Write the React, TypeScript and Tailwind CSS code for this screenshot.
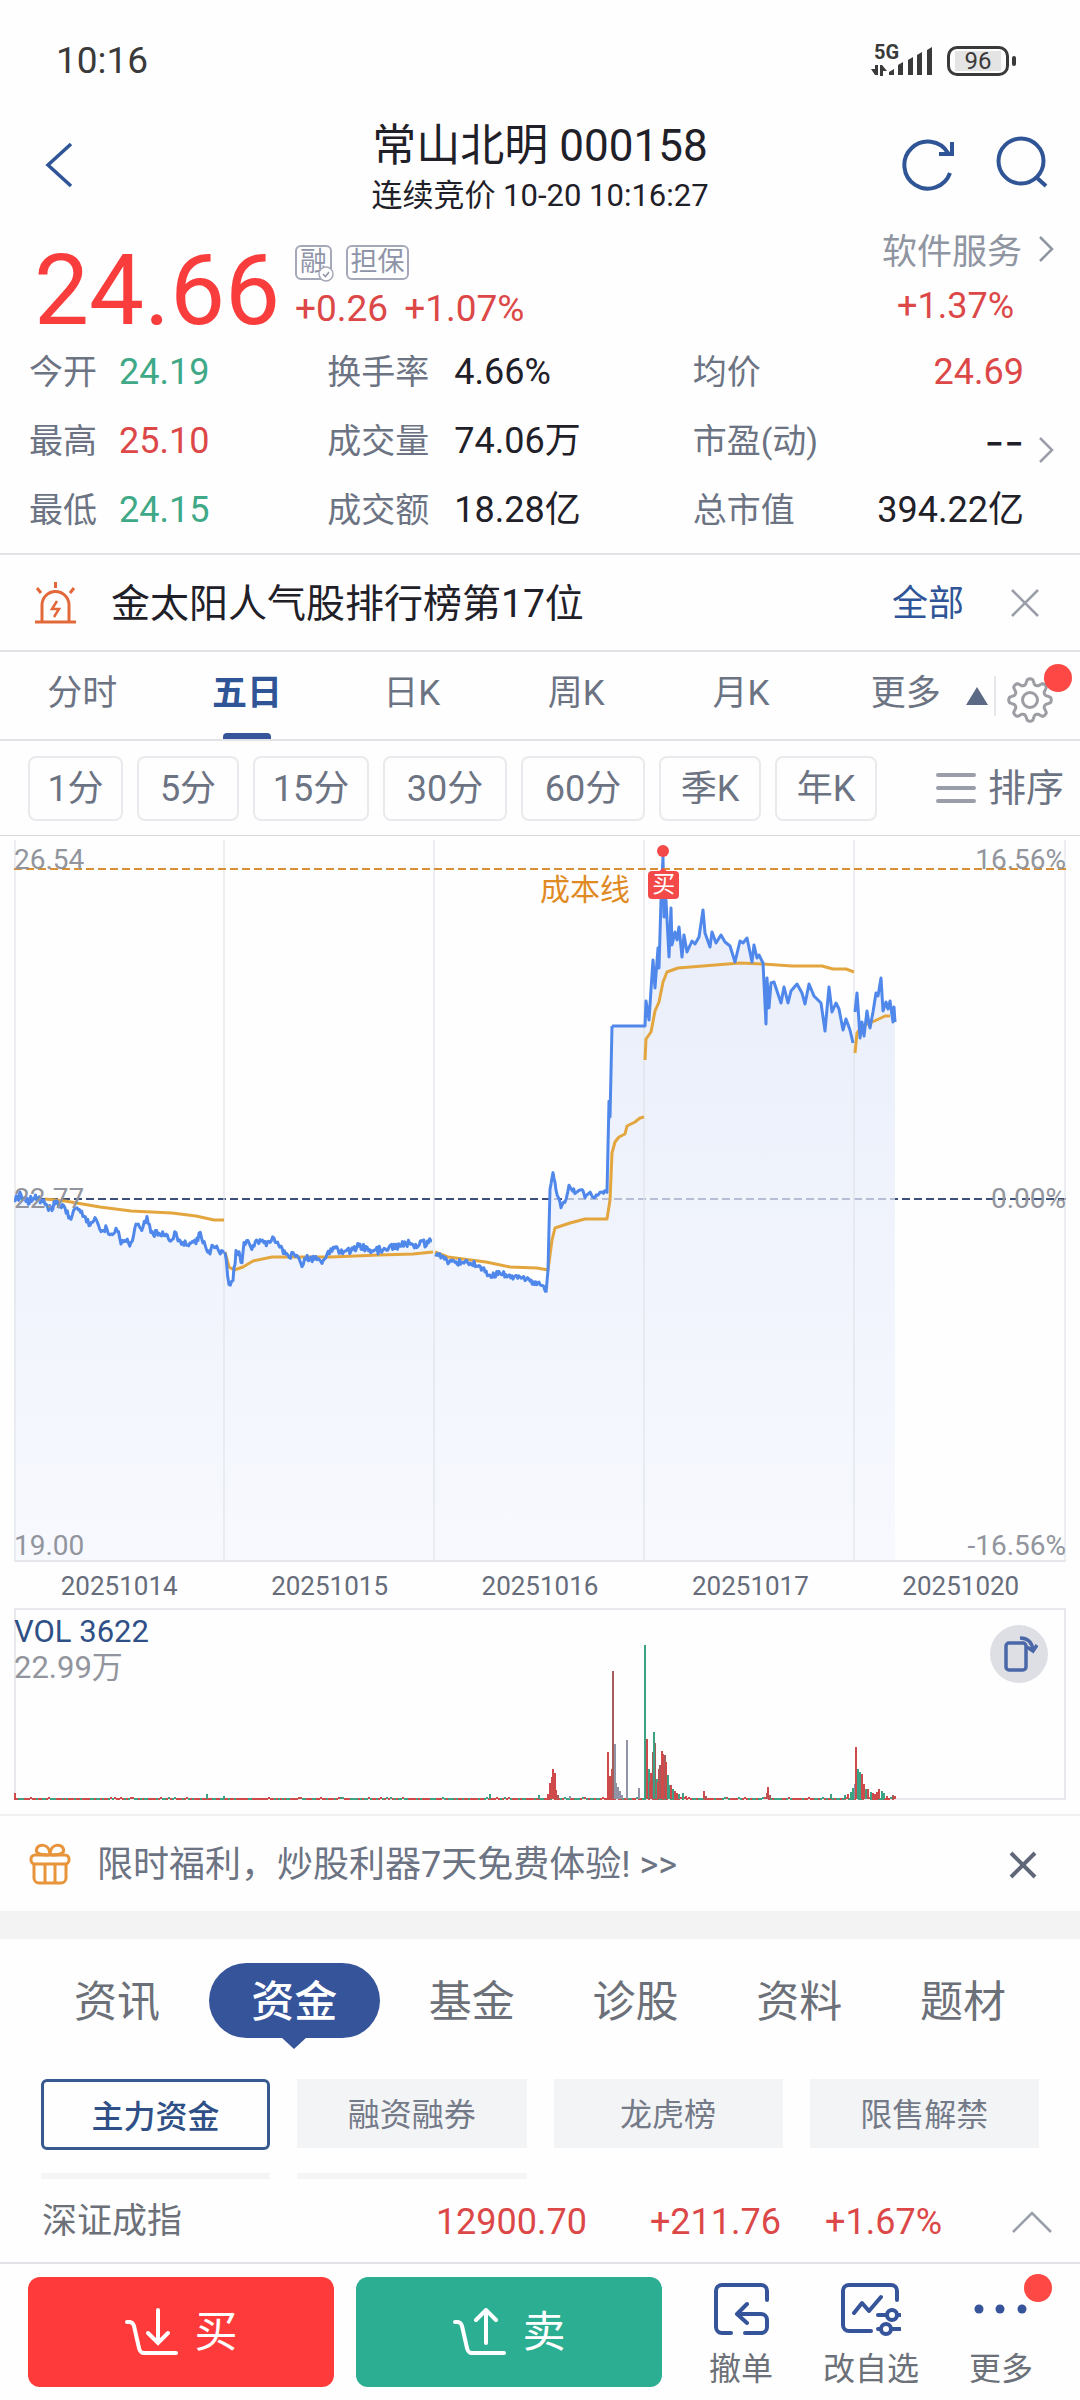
import type { ReactNode } from "react";

type Point = [number, number];

const quotes = [
  { label: "今开", value: "24.19", tone: "text-[36px] text-[#3fa987]" },
  { label: "换手率", value: "4.66%", tone: "text-[36px] text-[#1f2028]" },
  { label: "均价", value: "24.69", tone: "text-[36px] text-[#dc4747]" },
  { label: "最高", value: "25.10", tone: "text-[36px] text-[#dc4747]" },
  { label: "成交量", value: "74.06万", tone: "text-[36px] text-[#1f2028]" },
  { label: "市盈(动)", value: "--", tone: "font-['Inter'] text-[43px] text-[#1f2028]" },
  { label: "最低", value: "24.15", tone: "text-[36px] text-[#3fa987]" },
  { label: "成交额", value: "18.28亿", tone: "text-[36px] text-[#1f2028]" },
  { label: "总市值", value: "394.22亿", tone: "text-[36px] text-[#1f2028]" },
];

const periods = ["分时", "五日", "日K", "周K", "月K", "更多"];

const intervals = [
  { label: "1分", width: "w-[95px]" },
  { label: "5分", width: "w-[102px]" },
  { label: "15分", width: "w-[116px]" },
  { label: "30分", width: "w-[124px]" },
  { label: "60分", width: "w-[124px]" },
  { label: "季K", width: "w-[102px]" },
  { label: "年K", width: "w-[102px]" },
];

const dates = ["20251014", "20251015", "20251016", "20251017", "20251020"];
const sections = ["资讯", "资金", "基金", "诊股", "资料", "题材"];
const topics = ["主力资金", "融资融券", "龙虎榜", "限售解禁"];

// one series per trading day, in plot units (1052 x 726)
const priceDays: { jitter: number; points: Point[] }[] = [
  {
    jitter: 4,
    points: [
      [0, 364], [7, 359], [12, 366], [19, 362], [24, 361], [31, 369], [38, 374], [41, 367], [51, 372], [57, 382],
      [62, 372], [70, 381], [75, 389], [81, 382], [87, 394], [93, 392], [97, 399], [102, 392], [107, 407], [117, 406],
      [122, 389], [129, 391], [133, 381], [138, 397], [151, 400], [158, 405], [162, 397], [165, 405], [182, 408],
      [185, 397], [189, 407], [196, 417], [199, 411], [210, 417],
    ],
  },
  {
    jitter: 4,
    points: [
      [211, 417], [215, 448], [219, 444], [222, 416], [225, 417], [228, 428], [230, 407], [234, 405], [239, 411],
      [246, 405], [256, 407], [260, 401], [267, 411], [274, 420], [284, 420], [288, 430], [292, 422], [308, 426],
      [318, 414], [337, 416], [346, 409], [358, 416], [375, 412], [392, 408], [404, 409], [418, 405],
    ],
  },
  {
    jitter: 3,
    points: [
      [421, 419], [428, 419], [434, 427], [449, 426], [465, 429], [477, 441], [485, 436], [499, 443], [506, 440],
      [516, 446], [525, 446], [532, 456],
    ],
  },
  {
    jitter: 2,
    points: [
      [532, 456], [534, 434], [536, 353], [539, 337], [542, 354], [547, 371], [551, 366], [555, 350], [562, 357],
      [568, 353], [571, 362], [575, 357], [581, 362], [586, 356], [593, 356], [595, 265], [596, 281], [598, 190],
    ],
  },
  {
    jitter: 0,
    points: [
      [598, 190], [631, 190], [632, 165], [635, 184], [639, 124], [641, 152], [644, 112], [645, 132], [647, 64],
      [649, 21], [650, 81], [652, 64], [655, 121], [657, 72], [658, 109], [661, 96], [663, 104], [665, 91], [668, 121],
      [670, 99], [673, 116], [678, 105], [681, 108], [685, 101], [689, 74], [691, 97], [696, 111], [698, 96],
      [702, 107], [707, 99], [711, 106], [716, 110], [721, 126], [726, 105], [729, 107], [733, 102], [738, 126],
      [740, 109], [743, 122], [745, 119], [749, 127], [752, 188], [753, 142], [755, 172], [757, 147], [760, 146],
      [767, 167], [770, 151], [774, 167], [777, 155], [783, 148], [788, 157], [791, 168], [795, 148], [800, 160],
      [807, 167], [811, 195], [815, 151], [818, 176], [822, 167], [825, 173], [829, 194], [832, 183], [836, 194],
      [839, 207],
    ],
  },
  {
    jitter: 0,
    points: [
      [841, 176], [843, 157], [844, 170], [846, 202], [848, 186], [850, 200], [853, 175], [855, 188], [856, 192],
      [859, 176], [862, 157], [864, 160], [867, 142], [869, 175], [872, 166], [874, 173], [876, 165], [879, 186],
      [880, 171], [881, 186],
    ],
  },
];

const averageDays: Point[][] = [
  [[31, 363], [51, 365], [86, 371], [117, 375], [158, 377], [182, 380], [200, 384], [210, 384]],
  [
    [211, 416], [215, 431], [220, 434], [229, 431], [239, 425], [258, 421], [317, 421], [365, 419], [399, 418],
    [419, 416],
  ],
  [
    [421, 416], [434, 421], [472, 426], [496, 431], [523, 432], [534, 434], [538, 404], [541, 392], [547, 390],
    [556, 387], [571, 383], [593, 383], [596, 364], [598, 317], [601, 306], [605, 301], [611, 298], [613, 290],
    [621, 286], [626, 282], [630, 281],
  ],
  [
    [631, 224], [632, 203], [637, 196], [641, 175], [645, 166], [649, 146], [653, 136], [664, 132], [689, 130],
    [726, 127], [749, 128], [778, 130], [808, 130], [819, 133], [832, 133], [840, 136],
  ],
  [[841, 217], [843, 197], [847, 191], [856, 187], [867, 182], [871, 180], [876, 180]],
];

const RED = "#cf4a4a";
const GREEN = "#3da283";
const GREY = "#9194a6";
const BROWN = "#a55d5b";

// x, height, colour
const volumes: [number, number, string][] = [
  [0, 6, RED], [192, 5, GREEN], [209, 3, GREEN], [475, 5, GREEN], [524, 4, GREEN],
  [533, 5, RED], [535, 16, RED], [537, 22, RED], [538, 30, RED], [540, 26, RED], [541, 9, RED], [543, 4, BROWN],
  [555, 3, GREY], [593, 47, RED], [595, 23, RED], [597, 30, RED], [600, 55, GREY], [598, 128, BROWN],
  [601, 16, GREY], [603, 12, GREY], [605, 8, GREY], [607, 4, GREY], [612, 59, GREY], [624, 11, GREY],
  [632, 60, RED], [630, 154, GREEN], [634, 30, GREEN], [635, 17, BROWN], [636, 26, RED], [638, 47, BROWN],
  [640, 56, BROWN], [639, 67, GREEN], [642, 20, GREEN], [643, 17, RED], [644, 30, RED], [645, 34, BROWN],
  [647, 48, RED], [648, 45, RED], [650, 44, BROWN], [651, 37, RED], [653, 24, GREEN], [654, 14, GREEN],
  [656, 14, RED], [658, 10, GREEN], [660, 8, RED], [662, 6, RED], [664, 5, GREEN], [668, 6, GREEN], [671, 3, RED],
  [689, 8, RED], [691, 3, BROWN], [752, 6, BROWN], [753, 12, RED], [755, 4, BROWN], [816, 5, GREEN],
  [830, 4, GREEN], [833, 5, RED], [836, 7, GREEN], [838, 11, GREEN], [840, 15, GREY], [841, 52, RED],
  [843, 30, GREEN], [845, 27, GREEN], [847, 25, RED], [849, 15, RED], [851, 10, GREEN], [853, 10, RED],
  [856, 7, GREEN], [858, 6, RED], [860, 5, RED], [862, 7, RED], [864, 10, RED], [867, 8, GREEN], [869, 6, GREEN],
  [872, 3, RED], [878, 4, BROWN], [880, 3, RED],
];

const noise = (n: number) => {
  const v = Math.sin(n * 127.1) * 43758.5453;
  return (v - Math.floor(v)) * 2 - 1;
};

// adds a tick-level wobble between the recorded points
function densify(points: Point[], jitter: number): Point[] {
  if (!jitter) return points;
  const out: Point[] = [];
  for (let i = 0; i < points.length - 1; i++) {
    const [x0, y0] = points[i];
    const [x1, y1] = points[i + 1];
    const steps = Math.max(1, Math.round((x1 - x0) / 1.2));
    for (let s = 0; s < steps; s++) {
      const t = s / steps;
      const x = x0 + (x1 - x0) * t;
      out.push([x, y0 + (y1 - y0) * t + noise(x) * jitter * (s ? 1 : 0.4)]);
    }
  }
  out.push(points[points.length - 1]);
  return out;
}

const toPath = (points: Point[]) => "M" + points.map(([x, y]) => `${x.toFixed(1)} ${y.toFixed(1)}`).join("L");

const pricePaths = priceDays.map((d) => densify(d.points, d.jitter));
const areaPath = toPath(pricePaths.flat()) + "L881 726L0 726Z";

const gearPath =
  toPath(
    Array.from({ length: 96 }, (_, i) => {
      const a = (i / 96) * Math.PI * 2;
      const r = 18.5 + 3 * Math.tanh(1.6 * Math.cos(a * 8));
      return [24 + r * Math.sin(a), 24 - r * Math.cos(a)] as Point;
    }),
  ) + "Z";

const GRID_X = [1, 210, 420, 630, 840, 1051];

function Chevron({ className = "" }: { className?: string }) {
  return (
    <svg width="16" height="26" viewBox="0 0 16 26" fill="none" stroke="currentColor" strokeWidth="2.5" className={className}>
      <path d="M2 1L14 13L2 25" />
    </svg>
  );
}

function StatusBar() {
  return (
    <div className="flex h-[121px] items-center justify-between pl-14 pr-16 text-[#3a3a3a]">
      <span className="text-[37px] leading-none">10:16</span>
      <div className="flex items-center gap-[14px]">
        <div className="relative h-8 w-[62px]">
          <span className="absolute left-[3px] top-0 text-xl leading-[14px] font-bold">5G</span>
          <svg viewBox="0 0 62 32" className="h-8 w-[62px]" fill="currentColor">
            <path d="M18 30v-3l5-3v6zM27 30V20l5-3v13zM37 30V15l5-3v18zM46 30V10l5-3v23zM56 30V5l5-3v28z" />
            <path d="M4 20h3v10H4l-4-6h4zM9 20h2l5 6h-4v5H9z" />
          </svg>
        </div>
        <div className="flex items-center gap-[3px]">
          <div className="flex h-[30px] w-[62px] items-center justify-center rounded-[10px] border-3 border-[#3a3a3a]">
            <span className="h-[20px] w-[46px] bg-[#e4e4e4] text-center text-2xl leading-[21px]">96</span>
          </div>
          <span className="h-[10px] w-1 rounded-sm bg-[#3a3a3a]" />
        </div>
      </div>
    </div>
  );
}

function Header() {
  return (
    <header className="grid h-[100px] grid-cols-[1fr_auto_1fr] items-center">
      <button type="button" aria-label="返回" className="justify-self-start pb-3 pl-11 text-[#2f5597]">
        <svg width="30" height="46" viewBox="0 0 30 46" fill="none" stroke="currentColor" strokeWidth="3.5">
          <path d="M27 2L4 23L27 44" />
        </svg>
      </button>
      <div className="text-center text-[#1f2028]">
        <h1 className="text-[44px] leading-[50px]">常山北明 000158</h1>
        <p className="text-[31px] leading-[50px]">连续竞价 10-20 10:16:27</p>
      </div>
      <div className="flex gap-10 justify-self-end pr-8 pb-4 text-[#2f5597]">
        <button type="button" aria-label="刷新">
          <svg width="54" height="56" viewBox="0 0 54 56" fill="none" stroke="currentColor" strokeWidth="4">
            <path d="M48 38A23.5 23.5 0 1 1 46 18" />
            <path d="M50 7V19H37" />
          </svg>
        </button>
        <button type="button" aria-label="搜索">
          <svg width="52" height="54" viewBox="0 0 52 54" fill="none" stroke="currentColor" strokeWidth="4">
            <circle cx="25" cy="25" r="22.5" />
            <path d="M40 41L50 50" />
          </svg>
        </button>
      </div>
    </header>
  );
}

function Price() {
  return (
    <section className="flex h-[117px] justify-between pt-3 pr-[26px] pl-[34px]">
      <div className="flex pt-2">
        <strong className="w-[261px] text-[98px] leading-[100px] font-normal text-[#f93c3c]">24.66</strong>
        <div className="pt-1">
          <div className="flex gap-[14px] text-[#8f94a8]">
            <span className="relative h-[35px] w-[37px] rounded-md border-2 border-[#a4a8b8] text-center text-[27px] leading-[31px]">
              融
              <svg viewBox="0 0 16 16" className="absolute -right-1 -bottom-1 h-4 w-4">
                <circle cx="8" cy="8" r="7" fill="#fff" stroke="#a4a8b8" strokeWidth="1.5" />
                <path d="M5 8L7.5 10.5L11 6" fill="none" stroke="#8f94a8" strokeWidth="1.5" />
              </svg>
            </span>
            <span className="h-[35px] w-[63px] rounded-md border-2 border-[#a4a8b8] text-center text-[27px] leading-[31px]">
              担保
            </span>
          </div>
          <p className="flex gap-4 text-[37px] leading-[58px] text-[#dc4747]">
            <span>+0.26</span>
            <span>+1.07%</span>
          </p>
        </div>
      </div>
      <div>
        <a href="#sector" className="flex items-center gap-4 text-[35px] leading-[40px] text-[#8f95a1]">
          软件服务
          <Chevron className="mb-2" />
        </a>
        <p className="pr-10 text-right text-[36px] leading-[66px] text-[#dc4747]">+1.37%</p>
      </div>
    </section>
  );
}

function Quotes() {
  return (
    <section className="flex pb-2">
      <dl className="grid flex-1 grid-cols-[298fr_365fr_331fr] pl-[29px]">
        {quotes.map((q, i) => (
          <div key={q.label} className={i % 3 === 2 ? "flex justify-between leading-[69px]" : "flex leading-[69px]"}>
            <dt className={`text-[34px] text-[#6c7383] ${i % 3 === 0 ? "w-[90px]" : i % 3 === 1 ? "w-[127px]" : ""}`}>
              {q.label}
            </dt>
            <dd className={q.tone}>{q.value}</dd>
          </div>
        ))}
      </dl>
      <button type="button" aria-label="更多行情" className="w-14 pt-4 pl-[14px] text-[#9a9ea8]">
        <Chevron />
      </button>
    </section>
  );
}

function Notice() {
  return (
    <section className="flex h-[97px] items-center border-t-2 border-[#e2e3e6] pr-10 pl-[34px]">
      <svg width="43" height="44" viewBox="0 0 43 44" fill="none" stroke="#e2683a" strokeWidth="3">
        <path d="M8 40V24a13.5 13.5 0 0 1 27 0V40M1 41H42M21.5 1V7M3 7L7 12M40 7L36 12" />
        <path d="M23 20L18 28H25L20 36" strokeWidth="2.5" />
      </svg>
      <p className="flex-1 pt-[3px] pl-[34px] text-[39px] text-[#1f2028]">金太阳人气股排行榜第17位</p>
      <a href="#all" className="mr-[46px] pt-[2px] text-[36px] text-[#2f5597]">
        全部
      </a>
      <button type="button" aria-label="关闭提醒" className="text-[#9a9ea8]">
        <svg width="30" height="30" viewBox="0 0 30 30" fill="none" stroke="currentColor" strokeWidth="2.5">
          <path d="M2 2L28 28M28 2L2 28" />
        </svg>
      </button>
    </section>
  );
}

function Periods() {
  return (
    <nav className="flex h-[89px] border-t-2 border-[#e2e3e6]">
      <div className="grid flex-1 grid-cols-6">
        {periods.map((p) => (
          <button
            key={p}
            type="button"
            className={
              p === "五日"
                ? "relative pb-[2px] text-[35px] font-bold text-[#2f5597]"
                : "relative pb-[2px] text-[35px] text-[#6c7383]"
            }
          >
            {p}
            {p === "五日" && (
              <span className="absolute bottom-0 left-1/2 h-[6px] w-12 -translate-x-1/2 rounded-t-sm bg-[#36549a]" />
            )}
            {p === "更多" && (
              <svg viewBox="0 0 22 18" className="absolute top-[35px] right-0 h-[18px] w-[22px]" fill="#5d6a85">
                <path d="M11 0L22 18H0Z" />
              </svg>
            )}
          </button>
        ))}
      </div>
      <button type="button" aria-label="设置" className="relative w-[92px] pt-2 pl-[18px]">
        <span className="absolute top-6 left-[6px] h-10 w-[2px] bg-[#e6e7ea]" />
        <svg width="48" height="48" viewBox="0 0 48 48" fill="none" stroke="#9c9ea3" strokeWidth="3">
          <path d={gearPath} />
          <circle cx="24" cy="24" r="7.5" />
        </svg>
        <span className="absolute top-3 right-2 h-7 w-7 rounded-full bg-[#fd4846]" />
      </button>
    </nav>
  );
}

function Intervals() {
  return (
    <div className="flex h-[96px] items-center justify-between border-t-2 border-[#e2e3e6] pr-4 pl-7 text-[#6c7383]">
      <div className="flex gap-[14px]">
        {intervals.map((it) => (
          <button
            key={it.label}
            type="button"
            className={`h-[65px] rounded-lg border-2 border-[#e9eaed] pt-[2px] text-[36px] leading-none ${it.width}`}
          >
            {it.label}
          </button>
        ))}
      </div>
      <button type="button" className="flex items-center gap-3 text-[38px] leading-none">
        <svg width="40" height="34" viewBox="0 0 40 34" stroke="#9a9ea8" strokeWidth="4" strokeLinecap="round">
          <path d="M2 4H38M2 17H38M2 30H38" />
        </svg>
        排序
      </button>
    </div>
  );
}

function PriceChart() {
  return (
    <div className="relative">
      <svg viewBox="0 0 1052 726" className="block h-auto w-full" fill="none">
        <defs>
          <linearGradient id="area" x1="0" y1="0" x2="0" y2="1">
            <stop offset="0" stopColor="#dfe6f8" />
            <stop offset="1" stopColor="#f4f7fe" />
          </linearGradient>
        </defs>
        <path d="M0 363H1052" stroke="#3e4f77" strokeWidth="2" strokeDasharray="8 4" />
        <path d={areaPath} fill="url(#area)" fillOpacity="0.7" />
        {GRID_X.map((x) => (
          <path key={x} d={`M${x} 4V726`} stroke="#dfe2e8" strokeOpacity="0.6" strokeWidth="2" />
        ))}
        <path d="M0 725H1052" stroke="#e6e7ea" strokeWidth="2" />
        {averageDays.map((points, i) => (
          <path key={i} d={toPath(points)} stroke="#e3a63f" strokeWidth="3" strokeLinejoin="round" />
        ))}
        {pricePaths.map((points, i) => (
          <path key={i} d={toPath(points)} stroke="#4f88ea" strokeWidth="3" strokeLinejoin="round" />
        ))}
        <path d="M0 33H1052" stroke="#d98f35" strokeWidth="2" strokeDasharray="8 4" />
        <circle cx="649" cy="15" r="6" fill="#f34a49" />
        <path d="M649 32L655 37H643Z" fill="#f34a49" />
      </svg>
      <div className="absolute inset-0 text-[28px] leading-8 text-[#92959d]">
        <span className="absolute top-[8px] left-0">26.54</span>
        <span className="absolute top-[8px] right-0">16.56%</span>
        <span className="absolute top-1/2 left-0 -translate-y-1/2">22.77</span>
        <span className="absolute top-1/2 right-0 -translate-y-1/2">0.00%</span>
        <span className="absolute bottom-0 left-0">19.00</span>
        <span className="absolute right-0 bottom-0">-16.56%</span>
        <span className="absolute top-[38px] left-1/2 text-[30px] text-[#e08a24]">成本线</span>
        <span className="absolute top-[35px] left-[60%] ml-[3px] h-7 w-[31px] rounded-sm bg-[#f34a49] text-center text-[23px] leading-7 text-white">
          买
        </span>
      </div>
    </div>
  );
}

function VolumeChart() {
  return (
    <div className="relative">
      <svg viewBox="0 0 1052 192" className="block h-auto w-full">
        <rect x="1" y="1" width="1050" height="190" fill="none" stroke="#e8e9ec" strokeWidth="2" />
        {Array.from({ length: 440 }, (_, i) => (
          <rect
            key={i}
            x={i * 2}
            y={noise(i + 7) > 0.7 ? 189 : 190}
            width="2"
            height="2"
            fill={noise(i) > 0.2 ? GREEN : RED}
          />
        ))}
        {volumes.map(([x, h, color]) => (
          <rect key={x} x={x} y={191 - h} width="2" height={h} fill={color} />
        ))}
      </svg>
      <div className="absolute top-[6px] left-0 text-[31px] leading-[36px]">
        <p className="text-[#2f5086]">VOL 3622</p>
        <p className="text-[#92959d]">22.99万</p>
      </div>
      <button
        type="button"
        aria-label="横屏"
        className="absolute top-[17px] right-[18px] flex h-[58px] w-[58px] items-center justify-center rounded-full bg-[#dedfe5]"
      >
        <svg width="38" height="38" viewBox="0 0 38 38" fill="none" stroke="#4a68a8" strokeWidth="3.5">
          <rect x="6" y="8" width="20" height="27" rx="3" />
          <path d="M20 3C28 3 32 7 33 15M27 12L33 16L37 10" />
        </svg>
      </button>
    </div>
  );
}

function Promo() {
  return (
    <section className="flex h-[97px] items-center border-t-2 border-[#f0f0f2] pr-[42px] pl-[29px] text-[#6c7383]">
      <svg width="42" height="42" viewBox="0 0 42 42" fill="none" stroke="#e8943a" strokeWidth="3">
        <rect x="2" y="12" width="38" height="9" rx="4" />
        <path d="M5 21V35a5 5 0 0 0 5 5H32a5 5 0 0 0 5-5V21M16 22V39M26 22V39" />
        <path d="M20 12C8 12 6 9 8 5S20 0 21 11C22 0 32 1 34 5S34 12 22 12" />
      </svg>
      <a href="#promo" className="flex-1 pt-[2px] pl-[26px] text-[36px]">
        限时福利，炒股利器7天免费体验! &gt;&gt;
      </a>
      <button type="button" aria-label="关闭福利" className="pt-[2px]">
        <svg width="30" height="30" viewBox="0 0 30 30" fill="none" stroke="#5f6779" strokeWidth="4">
          <path d="M3 3L27 27M27 3L3 27" />
        </svg>
      </button>
    </section>
  );
}

function Sections() {
  return (
    <nav className="flex px-[35px] pt-6 pb-[41px] text-[43px] leading-[71px] text-[#6c7078]">
      {sections.map((s) =>
        s === "资金" ? (
          <button
            key={s}
            type="button"
            className="relative mx-[10px] w-[171px] rounded-full bg-[#36549a] pt-1 font-medium text-white"
          >
            {s}
            <svg viewBox="0 0 26 12" className="absolute top-full left-1/2 -mt-px h-3 w-[26px] -translate-x-1/2" fill="#36549a">
              <path d="M0 0H26L13 12Z" />
            </svg>
          </button>
        ) : (
          <button key={s} type="button" className="flex-1 pt-1">
            {s}
          </button>
        ),
      )}
    </nav>
  );
}

function Topics() {
  return (
    <div className="px-[41px]">
      <div className="grid grid-cols-4 items-start gap-x-[27px] text-[32px]">
        {topics.map((t, i) => (
          <button
            key={t}
            type="button"
            className={
              i === 0
                ? "h-[71px] rounded-md border-3 border-[#36598f] pt-1 font-medium text-[#2f5086]"
                : "h-[69px] bg-[#f3f4f6] pt-[2px] text-[#747a88]"
            }
          >
            {t}
          </button>
        ))}
      </div>
      <div className="mt-[23px] grid grid-cols-4 gap-x-[27px]">
        <span className="h-[6px] bg-[#f5f5f6]" />
        <span className="h-[6px] bg-[#f5f5f6]" />
      </div>
    </div>
  );
}

function IndexRow() {
  return (
    <section className="flex h-[83px] items-center pt-[3px] pr-7 pl-[42px] text-[36px] text-[#dc4747]">
      <span className="flex-1 text-[35px] text-[#6c7078]">深证成指</span>
      <span className="w-[200px] text-right">12900.70</span>
      <span className="w-[194px] text-right">+211.76</span>
      <span className="w-[161px] text-right">+1.67%</span>
      <button type="button" aria-label="展开指数" className="ml-[70px] text-[#9a9ea8]">
        <svg width="40" height="22" viewBox="0 0 40 22" fill="none" stroke="currentColor" strokeWidth="2.5">
          <path d="M1 21L20 2L39 21" />
        </svg>
      </button>
    </section>
  );
}

function TradeButton({ label, color, children }: { label: string; color: string; children: ReactNode }) {
  return (
    <button
      type="button"
      className={`flex h-[110px] flex-[306] items-center justify-center gap-4 rounded-xl text-[43px] text-white ${color}`}
    >
      <svg width="54" height="48" viewBox="0 0 54 48" fill="none" stroke="#fff" strokeWidth="4" strokeLinecap="round">
        <path d="M2 14H4C7 14 8 15 9 18L14 40C15 44 16 45 19 45H51" strokeLinejoin="round" />
        {children}
      </svg>
      {label}
    </button>
  );
}

function NavItem({ label, children }: { label: string; children: ReactNode }) {
  return (
    <button type="button" className="relative flex flex-1 flex-col items-center pt-[6px] text-[32px] text-[#6c7078]">
      <svg
        width="60"
        height="54"
        viewBox="0 0 60 54"
        fill="none"
        stroke="#36549a"
        strokeWidth="4"
        strokeLinecap="round"
        strokeLinejoin="round"
      >
        {children}
      </svg>
      <span className="mt-[14px] leading-9">{label}</span>
      {label === "更多" && <span className="absolute -top-[3px] left-1/2 ml-[23px] h-7 w-7 rounded-full bg-[#fd4846]" />}
    </button>
  );
}

function BottomBar() {
  return (
    <footer className="flex border-t-2 border-[#e2e3e6] pt-[13px] pr-[14px] pb-[13px] pl-7">
      <TradeButton label="买" color="bg-[#fe3b3a]">
        <path d="M33 2V34M23 25L33 35L43 25" />
      </TradeButton>
      <span className="w-[22px]" />
      <TradeButton label="卖" color="bg-[#2cae93]">
        <path d="M33 35V3M23 12L33 2L43 12" />
      </TradeButton>
      <nav className="ml-[14px] flex flex-[390]">
        <NavItem label="撤单">
          <path d="M56 17V8a6 6 0 0 0-6-6H11a6 6 0 0 0-6 6V44a6 6 0 0 0 6 6H20" />
          <path d="M34 50H50a6 6 0 0 0 6-6V37a6 6 0 0 0-6-6H27M36 21L26 31L36 40" />
        </NavItem>
        <NavItem label="改自选">
          <path d="M56 17V8a6 6 0 0 0-6-6H8a6 6 0 0 0-6 6V42a6 6 0 0 0 6 6H30M13 30L21 20L28 28L40 14" />
          <path d="M37 32H45M56 32H59M37 46H39M50 46H59" />
          <circle cx="51" cy="32" r="5" />
          <circle cx="45" cy="46" r="5" />
        </NavItem>
        <NavItem label="更多">
          <g fill="#36549a" stroke="none">
            <circle cx="8" cy="26" r="4.5" />
            <circle cx="29" cy="26" r="4.5" />
            <circle cx="51" cy="26" r="4.5" />
          </g>
        </NavItem>
      </nav>
    </footer>
  );
}

export default function App() {
  return (
    <main className="bg-[#fefefe] font-['Roboto','Noto_Sans_CJK_SC',sans-serif]">
      <StatusBar />
      <Header />
      <Price />
      <Quotes />
      <Notice />
      <Periods />
      <Intervals />
      <section className="border-t border-[#d9dade] px-[14px] pb-[14px]">
        <PriceChart />
        <div className="grid h-[46px] grid-cols-5 items-center pt-[2px] text-center text-[26px] text-[#666c7a]">
          {dates.map((d) => (
            <span key={d}>{d}</span>
          ))}
        </div>
        <VolumeChart />
      </section>
      <Promo />
      <div className="h-7 bg-[#f3f3f3]" />
      <Sections />
      <Topics />
      <IndexRow />
      <BottomBar />
    </main>
  );
}
